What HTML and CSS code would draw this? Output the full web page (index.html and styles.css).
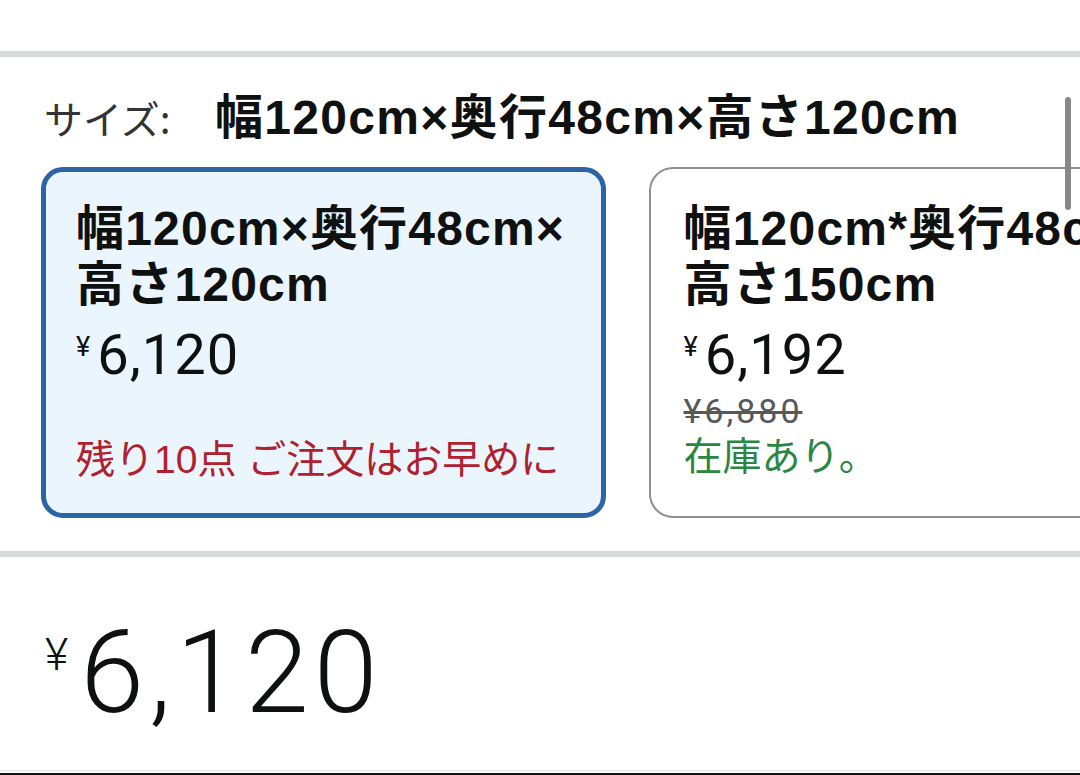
FILE: index.html
```html
<!DOCTYPE html>
<html lang="ja">
<head>
<meta charset="utf-8">
<link rel="stylesheet" href="styles.css">
</head>
<body>
<div class="page">
  <div class="top-space"></div>
  <div class="divider"></div>
  <section class="variations">
    <div class="size-label"><span class="label-key">サイズ:</span><span class="label-value">幅120cm×奥行48cm×高さ120cm</span></div>
    <div class="cards">
      <div class="card selected">
        <div class="card-title">幅120cm×奥行48cm×<br>高さ120cm</div>
        <div class="card-price"><span class="yen">¥</span>6,120</div>
        <div class="card-spacer"></div>
        <div class="stock low">残り10点 ご注文はお早めに</div>
      </div>
      <div class="card">
        <div class="card-title">幅120cm*奥行48cm*<br>高さ150cm</div>
        <div class="card-price"><span class="yen">¥</span>6,192</div>
        <div class="list-price">¥6,880</div>
        <div class="stock in">在庫あり。</div>
      </div>
    </div>
    <div class="scrollbar"></div>
  </section>
  <div class="divider"></div>
  <section class="price-block">
    <div class="big-price"><span class="big-yen">¥</span>6,120</div>
  </section>
  <div class="bottom-line"></div>
  <div class="bottom-bar"></div>
</div>
</body>
</html>
```

FILE: styles.css
```css
* { box-sizing: border-box; }
html, body { margin: 0; padding: 0; background: #fff; }
body {
  font-family: "Liberation Sans", "Noto Sans CJK JP", sans-serif;
  color: #0f1111;
  width: 1080px;
  height: 775px;
  overflow: hidden;
}
.page { display: flex; flex-direction: column; height: 775px; }
.top-space { height: 51px; flex: 0 0 auto; }
.divider { height: 6px; background: #d5d9d9; flex: 0 0 auto; }
.variations {
  position: relative;
  flex: 0 0 auto;
  height: 494px;
  padding: 0 0 0 41px;
  overflow: hidden;
}
.size-label {
  display: flex;
  align-items: baseline;
  margin-top: 30px;
  height: 60px;
  line-height: 60px;
  white-space: nowrap;
}
.label-key {
  font-family: "Noto Sans CJK JP", sans-serif;
  font-size: 39px;
  font-weight: 400;
  color: #333;
  margin-left: 3px;
  width: 171px;
  flex: 0 0 auto;
}
.label-value { font-size: 48px; font-weight: 700; letter-spacing: 1.3px; }
.cards {
  display: flex;
  gap: 43px;
  margin-top: 20px;
}
.card {
  flex: 0 0 auto;
  width: 565px;
  height: 351px;
  border: 2.5px solid #8d9096;
  border-radius: 24px;
  background: #fff;
  padding: 31.5px 0 0 32.5px;
  display: flex;
  flex-direction: column;
}
.card.selected {
  border: 5px solid #2b65a6;
  border-radius: 22px;
  background: #eaf5fd;
  padding: 29px 0 0 30px;
}
.card-title {
  font-size: 48px;
  font-weight: 700;
  line-height: 56px;
  letter-spacing: 1.2px;
  white-space: nowrap;
}
.card-price {
  font-family: Roboto, "Noto Sans CJK JP", sans-serif;
  font-size: 56px;
  font-weight: 400;
  line-height: 66px;
  letter-spacing: 1px;
  margin-top: 1px;
}
.yen { font-size: 27px; vertical-align: 18px; margin-right: 6px; }
.card-spacer { height: 47px; flex: 0 0 auto; }
.list-price {
  font-family: Roboto, sans-serif;
  font-size: 34px;
  line-height: 42px;
  letter-spacing: 3px;
  color: #565959;
  text-decoration: line-through;
  margin-top: 2px;
  height: 42px;
}
.stock {
  font-size: 39px;
  line-height: 50px;
  margin-top: 0;
  white-space: nowrap;
}
.stock.low { color: #b1202e; }
.stock.in { color: #2a8642; }
.scrollbar {
  position: absolute;
  right: 9px;
  top: 40px;
  width: 6px;
  height: 113px;
  border-radius: 3px;
  background: #888;
}
.price-block {
  flex: 1;
  padding: 38px 0 0 45px;
}
.big-price {
  font-family: Roboto, sans-serif;
  font-size: 115px;
  font-weight: 300;
  line-height: 120px;
  letter-spacing: 5px;
  color: #0f1111;
  white-space: nowrap;
}
.big-yen { font-size: 45px; vertical-align: 42px; margin-right: 12px; letter-spacing: 0; }
.bottom-line { height: 1px; background: #e6e6e6; margin-bottom: 2px; flex: 0 0 auto; }
.bottom-bar { height: 2px; background: #111; flex: 0 0 auto; }
```
